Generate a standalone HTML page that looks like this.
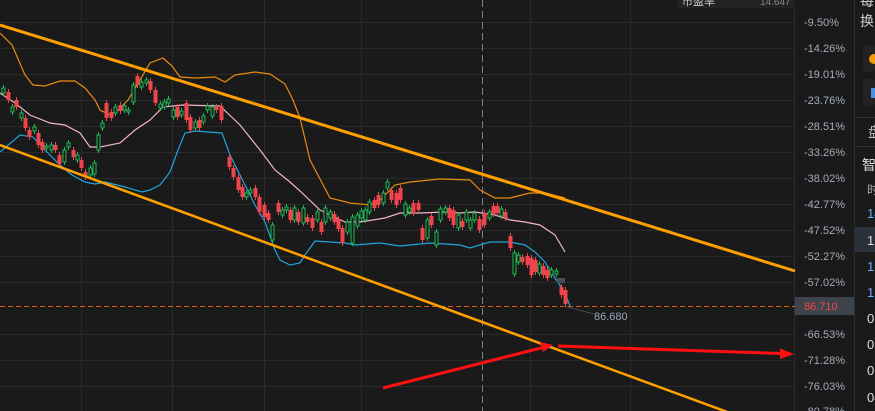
<!DOCTYPE html>
<html><head><meta charset="utf-8"><style>
html,body{margin:0;padding:0;background:#1a1a1a;width:875px;height:411px;overflow:hidden;font-family:"Liberation Sans","Noto Sans CJK SC",sans-serif}
svg{position:absolute;left:0;top:0}
</style></head><body>
<svg width="875" height="411" viewBox="0 0 875 411" xmlns="http://www.w3.org/2000/svg">
<rect width="875" height="411" fill="#1a1a1a"/>
<g stroke="#2a2a2a" stroke-width="1">
<path d="M0 22.5H795M0 48.5H795M0 74.5H795M0 100.5H795M0 126.5H795M0 152.5H795M0 178.5H795M0 204.5H795M0 230.5H795M0 256.5H795M0 282.5H795M0 334.5H795M0 360.5H795M0 386.5H795"/>
<path d="M81.5 0V411M172.5 0V411M264.5 0V411M361.5 0V411M530.5 0V411M630.5 0V411"/>
</g>
<line x1="794.5" y1="0" x2="794.5" y2="411" stroke="#2e2e2e"/>
<line x1="854.5" y1="0" x2="854.5" y2="411" stroke="#2e2e2e"/>
<rect x="678" y="0" width="117" height="8" fill="#232323"/>
<text x="682" y="5" fill="#ccc" font-size="11">市盈率</text>
<text x="760" y="5" fill="#888" font-size="10">14.647</text>
<line x1="482.5" y1="0" x2="482.5" y2="411" stroke="#7a8090" stroke-dasharray="7,4"/>
<line x1="0" y1="306.5" x2="795" y2="306.5" stroke="#e06010" stroke-dasharray="5,3"/>
<!-- bollinger -->
<polyline fill="none" stroke="#e88a10" stroke-width="1.2" points="0,33 12,45 25,75 33,85 45,86 60,81 75,81 85,88 95,100 100,110 110,115 118,110 128,100 140,80 150,63 163,58 172,66 180,77 195,78 215,77 225,82 235,75 255,72 270,74 285,84 293,100 300,118 310,160 330,198 350,203 370,205 380,200 395,185 410,182 440,179 470,180 480,190 495,198 510,198 530,193 545,193 565,198"/>
<polyline fill="none" stroke="#f0b4c8" stroke-width="1.2" points="0,93 15,103 30,115 50,123 65,125 80,133 90,147 100,147 120,143 135,130 150,120 163,107 183,105 220,106 240,125 260,150 275,170 290,182 300,191 320,210 345,222 360,222 385,218 400,213 420,213 445,212 460,213 475,212 495,215 510,220 525,222 540,225 555,235 565,252"/>
<polyline fill="none" stroke="#20a4dc" stroke-width="1.2" points="0,152 20,135 33,137 45,150 60,165 72,175 85,182 95,184 105,182 125,187 142,192 150,190 160,185 170,172 178,150 185,133 195,131 222,133 230,155 240,175 255,205 265,222 275,250 280,260 290,265 300,263 305,255 315,241 330,242 345,243 355,245 380,243 400,246 430,243 460,245 470,248 490,242 510,242 525,245 535,252 545,262 555,278 565,293 570,306"/>
<!-- candles -->
<g id="c" stroke-width="1"></g>
<rect x="557" y="278" width="8" height="5" fill="#4a4e55"/>
<!-- channel -->
<line x1="0" y1="25" x2="795" y2="271" stroke="#ffa000" stroke-width="3"/>
<line x1="0" y1="145" x2="760" y2="424" stroke="#ffa000" stroke-width="2.5"/>
<!-- arrows -->
<line x1="383" y1="388" x2="543" y2="347.5" stroke="#ff1010" stroke-width="3"/>
<polygon points="553,345 540,342 543,352" fill="#ff1010"/>
<line x1="558" y1="346" x2="782" y2="353.5" stroke="#ff1010" stroke-width="3"/>
<polygon points="794,354 780,348.5 780,359" fill="#ff1010"/>
<line x1="563" y1="306" x2="594" y2="314" stroke="#555" stroke-width="0.8"/>
<text x="594" y="320" fill="#9aa6bc" font-size="11">86.680</text>
<!-- axis -->
<g fill="#a3abbb" font-size="11">
<text x="804" y="26">-9.50%</text>
<text x="804" y="52">-14.26%</text>
<text x="804" y="78">-19.01%</text>
<text x="804" y="104">-23.76%</text>
<text x="804" y="130">-28.51%</text>
<text x="804" y="156">-33.26%</text>
<text x="804" y="182">-38.02%</text>
<text x="804" y="208">-42.77%</text>
<text x="804" y="234">-47.52%</text>
<text x="804" y="260">-52.27%</text>
<text x="804" y="286">-57.02%</text>
<text x="804" y="338">-66.53%</text>
<text x="804" y="364">-71.28%</text>
<text x="804" y="390">-76.03%</text>
<text x="804" y="415">-80.78%</text>
</g>
<rect x="795" y="297" width="59" height="18" fill="#3e444c"/>
<text x="804" y="310" fill="#f04848" font-size="11">86.710</text>
<!-- right panel -->
<text x="860" y="6" fill="#ccc" font-size="14">每</text>
<text x="860" y="26" fill="#ccc" font-size="14">换</text>
<rect x="863" y="45" width="12" height="27" rx="3" fill="#232323"/>
<circle cx="874" cy="59" r="5" fill="#f59a00"/>
<rect x="863" y="79" width="12" height="27" rx="3" fill="#232323"/>
<rect x="871" y="88" width="4" height="10" fill="#4a90e8"/>
<line x1="855" y1="117.5" x2="875" y2="117.5" stroke="#333"/>
<text x="868" y="137" fill="#bbb" font-size="14">盘</text>
<line x1="855" y1="146.5" x2="875" y2="146.5" stroke="#333"/>
<text x="862" y="170" fill="#ddd" font-size="14">智</text>
<text x="867" y="194" fill="#aaa" font-size="12">时</text>
<rect x="855" y="227" width="20" height="25" fill="#2b313b"/>
<g font-size="13">
<text x="867" y="218" fill="#6ab0ff">14</text>
<text x="867" y="245" fill="#ddd">1</text>
<text x="867" y="271" fill="#6ab0ff">16</text>
<text x="867" y="297" fill="#6ab0ff">1</text>
<text x="867" y="323" fill="#ddd">0</text>
<text x="867" y="349" fill="#ddd">0</text>
<text x="867" y="375" fill="#ddd">0</text>
<text x="867" y="402" fill="#ddd">04</text>
</g>
</svg>
<script>
var d=[[3,'g',88,93],[8,'r',92,100],[12,'g',107,112],[16,'r',100,107],[21,'g',113,118],[25,'r',118,128],[29,'r',130,137],[34,'g',127,131],[38,'r',133,145],[42,'r',142,150],[46,'g',146,148],[51,'g',145,150],[55,'r',145,150],[59,'r',155,164],[64,'g',150,162],[68,'g',143,147],[73,'r',150,157],[77,'g',155,160],[81,'r',160,168],[85,'r',172,177],[90,'g',168,175],[94,'g',163,174],[98,'g',135,150],[102,'g',123,128],[106,'r',103,118],[111,'r',112,118],[115,'g',107,113],[120,'r',105,111],[124,'g',106,110],[128,'g',110,112],[133,'g',85,102],[137,'r',76,85],[141,'g',82,87],[146,'g',80,83],[150,'r',81,90],[155,'r',90,103],[160,'g',104,108],[164,'g',102,107],[168,'g',99,103],[173,'g',110,117],[177,'r',107,117],[181,'g',111,115],[186,'r',103,120],[190,'r',117,130],[195,'g',122,128],[199,'r',120,128],[203,'g',116,122],[207,'g',106,110],[212,'g',107,116],[216,'r',107,110],[221,'r',106,120],[229,'r',157,167],[233,'r',168,177],[238,'r',177,190],[242,'r',187,197],[246,'g',193,197],[250,'g',190,193],[255,'r',188,197],[259,'r',197,212],[264,'r',205,217],[268,'r',213,220],[272,'g',225,240],[278,'r',203,212],[282,'g',210,215],[286,'g',207,210],[290,'r',210,220],[294,'g',208,220],[298,'r',212,222],[303,'g',208,223],[307,'r',217,222],[312,'r',218,228],[317,'g',212,220],[321,'r',222,232],[325,'g',208,222],[330,'g',212,218],[334,'r',214,222],[338,'r',219,229],[342,'r',228,243],[347,'g',222,232],[352,'g',217,243],[357,'g',215,226],[361,'g',211,218],[365,'g',210,220],[369,'g',202,212],[374,'r',200,208],[378,'r',195,205],[383,'g',193,203],[387,'g',182,188],[391,'r',190,200],[396,'r',193,205],[400,'r',188,200],[405,'g',204,215],[409,'g',208,212],[413,'r',203,213],[418,'r',203,210],[422,'r',228,240],[427,'g',220,238],[431,'r',216,225],[436,'g',232,245],[440,'g',209,220],[445,'g',208,212],[449,'r',208,218],[453,'r',210,225],[458,'g',215,228],[462,'r',221,227],[466,'g',212,220],[470,'g',220,228],[474,'g',213,220],[479,'r',219,230],[484,'r',213,225],[489,'g',212,218],[493,'r',206,214],[497,'r',206,213],[501,'g',209,216],[505,'r',212,218],[510,'r',236,248],[514,'g',253,274],[518,'g',255,262],[522,'r',257,262],[527,'r',256,265],[531,'r',258,275],[535,'r',260,272],[539,'g',264,273],[543,'r',266,275],[547,'r',270,278],[551,'g',270,275],[556,'g',271,274],[561,'r',287,295],[565,'r',290,304]];
var s='';d.forEach(function(c){var col=c[1]=='r'?'#f0444c':'#1db954';var x=c[0],t=c[2],b=c[3];
s+='<line x1="'+(x+0.5)+'" y1="'+(t-3)+'" x2="'+(x+0.5)+'" y2="'+(b+3)+'" stroke="'+col+'"/>';
if(c[1]=='r')s+='<rect x="'+(x-1.5)+'" y="'+t+'" width="4" height="'+(b-t)+'" fill="'+col+'"/>';
else s+='<rect x="'+(x-1)+'" y="'+t+'" width="3" height="'+(b-t)+'" fill="#1a1a1a" stroke="'+col+'"/>';});
document.getElementById('c').innerHTML=s;
</script>
</body></html>
